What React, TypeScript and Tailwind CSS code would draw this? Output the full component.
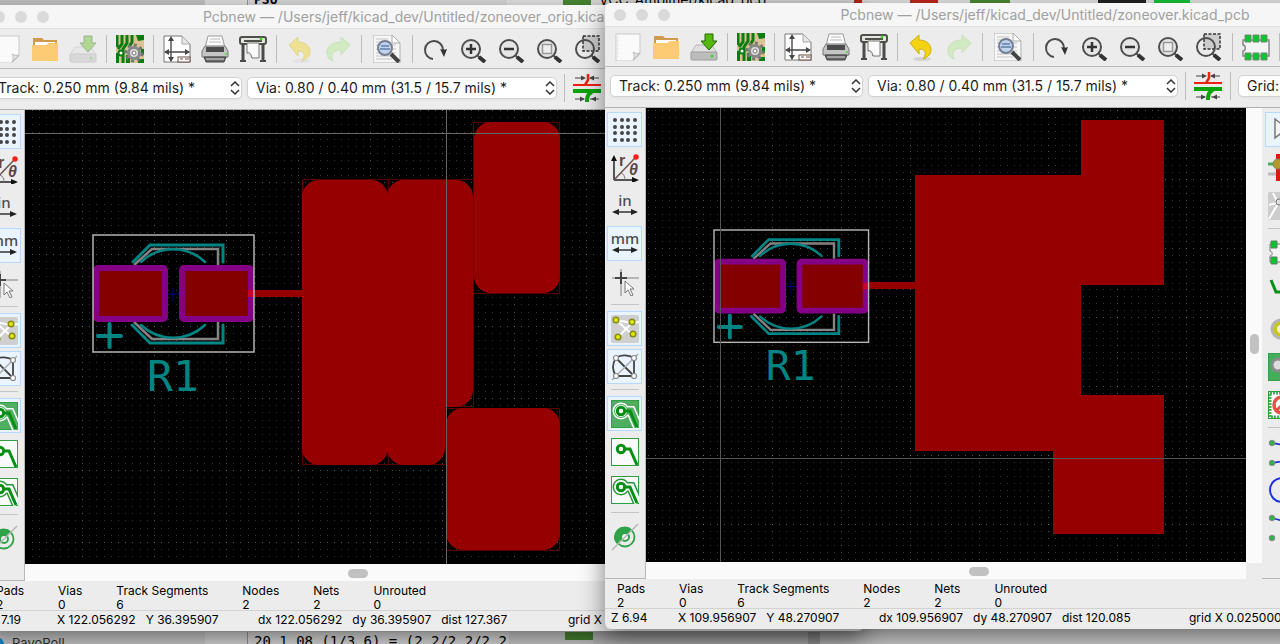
import type { ReactNode } from "react";
import clsx from "clsx";

/* ---------- toolbar glyphs, all on a 28px box ---------- */

function Icon({ children }: { children: ReactNode }) {
  return (
    <svg viewBox="0 0 28 28" className="size-7 shrink-0" fill="none" aria-hidden="true">
      {children}
    </svg>
  );
}

const NewIcon = () => (
  <Icon>
    <path d="M2 1h24v20l-7 7H2z" fill="#fafafa" stroke="#c9c9c9" />
    <path d="M26 20c-3 1-5 0-7-1 2 3 1 6 0 8z" fill="#e2e2e2" stroke="#bdbdbd" />
    <path d="M4 3v22" stroke="#d5d5d5" strokeDasharray="1 1" />
  </Icon>
);

const OpenIcon = () => (
  <Icon>
    <path d="M2 3h9l2 2h13v20H2z" fill="#cf9a4b" />
    <path d="M4 7h20v6H4z" fill="#fff" />
    <path d="M1 10h14l3-2h9v18H1z" fill="#fdcb74" />
  </Icon>
);

const SaveIcon = () => (
  <Icon>
    <path d="M6 12h16l5 8H1z" fill="#e0e0e0" stroke="#b4b4b4" />
    <rect x="1" y="19" width="26" height="8" rx="1" fill="#bcbcbc" stroke="#9c9c9c" />
    <circle cx="22" cy="23" r="1.5" fill="#39d32c" />
    <path d="M15 1h8v7h4l-8 9-8-9h4z" fill="#56b80e" stroke="#23640a" />
  </Icon>
);

const BoardIcon = () => (
  <Icon>
    <rect width="28" height="28" fill="#dcc193" />
    <path d="M1 0v12M6 0v9l-4 5M11 0v8l-4 6v14M16 0v7l-3 5" stroke="#0a7d12" strokeWidth="3" />
    <path d="M20 0h8v5l-6 1zM0 18h3v10H0zM10 20h4v8h-4zM24 8h4M22 24h6v4h-6zM25 14h3v6h-3z" fill="#0a7d12" />
    <circle cx="5" cy="18" r="2.5" fill="#fff" stroke="#0a7d12" strokeWidth="2" />
    <circle cx="18" cy="18" r="8" stroke="#777" strokeWidth="3" strokeDasharray="3 3.2" />
    <circle cx="18" cy="18" r="5.5" fill="#ddd" stroke="#888" strokeWidth="3" />
    <circle cx="18" cy="18" r="2" fill="#fff" stroke="#777" />
  </Icon>
);

const PageIcon = () => (
  <Icon>
    <path d="M1 1h18l8 8v18H1z" fill="#fff" stroke="#777" />
    <path d="M19 1v8h8z" fill="#e6e6e6" stroke="#aaa" />
    <path d="M8 3v23M2 17h24" stroke="#484848" strokeWidth="1.4" />
    <path d="m8 1-3 5h6zM8 27l-3-5h6zM1 17l5-3v6zM27 17l-5-3v6z" fill="#484848" />
    <rect x="15" y="22" width="12" height="5" fill="#fff" stroke="#6b4d40" />
    <path d="M17 24h3m2 0h4" stroke="#6b4d40" />
  </Icon>
);

const PrintIcon = () => (
  <Icon>
    <path d="M7 1h14l3 12H4z" fill="#fcfcfc" stroke="#999" />
    <path d="M9 4h10M8 7h12" stroke="#bbb" />
    <path d="M4 11h20l3 5v6H1v-6z" fill="#c5c5c5" stroke="#777" />
    <path d="M5 12h18v5H5z" fill="#4b4b4b" />
    <path d="M3 22h22l-2 5H5z" fill="#696969" stroke="#444" />
    <path d="M5 24h18" stroke="#ddd" />
    <circle cx="25" cy="19" r="1" fill="#47df31" />
  </Icon>
);

const PlotIcon = () => (
  <Icon>
    <rect x="1" y="2" width="26" height="7" rx="2" fill="#e5e5df" stroke="#50504a" strokeWidth="2" />
    <path d="M5 6h18" stroke="#50504a" strokeWidth="2" />
    <circle cx="22" cy="4" r="1.4" fill="#3ed31c" />
    <path d="M4 9v16M24 9v16" stroke="#4b4b4b" strokeWidth="3" />
    <path d="M1 26h6M21 26h6" stroke="#4b4b4b" strokeWidth="2" />
    <path d="M8 8h12v15h-7c-1-3-2-5-5-5z" fill="#fafafa" stroke="#777" />
    <path d="M8 18c3-1 4 1 5 5" fill="#ddd" stroke="#777" />
  </Icon>
);

const UndoIcon = () => (
  <Icon>
    <ellipse cx="15" cy="26" rx="9" ry="2" fill="#000" opacity=".1" />
    <path d="M3 10 12 2v5c8 0 12 5 12 10 0 4-3 7-8 9 3-4 4-10-4-10v5z" fill="#f4d313" stroke="#cdb010" />
  </Icon>
);

const RedoIcon = () => (
  <Icon>
    <path d="M26 10 17 2v5C8 7 3 12 3 17c0 5 2 8 6 9-3-6 0-11 8-11v5z" fill="#a9e886" stroke="#93d46e" />
  </Icon>
);

const FindIcon = () => (
  <Icon>
    <path d="M0 0h19l8 8v20H0z" fill="#f6f6f6" stroke="#b0b0b0" />
    <path d="M19 0v8h8z" fill="#fff" stroke="#aaa" />
    <path d="M3 4h12M3 7h14M3 10h20M3 14h20M3 18h20M3 21h20M3 24h16" stroke="#c3c3c3" />
    <circle cx="12" cy="13" r="7" fill="#b4cdf0" fillOpacity=".8" stroke="#747f90" strokeWidth="2" />
    <path d="M8 11h8M7 14h10" stroke="#6480a8" strokeWidth="1.5" />
    <path d="m18 19 8 8" stroke="#444" strokeWidth="4" />
  </Icon>
);

const RedrawIcon = () => (
  <Icon>
    <path d="M11 24A9 9 0 1 1 21 15" stroke="#4d4d4d" strokeWidth="2" />
    <path d="M18 14c2 1 5 1 7 0l-3 8z" fill="#333" />
  </Icon>
);

function ZoomIcon({ kind }: { kind: "in" | "out" | "fit" | "area" }) {
  return (
    <Icon>
      {kind === "area" && (
        <rect x="9" y="1" width="16" height="15" fill="#ccc" stroke="#333" strokeWidth="1.5" strokeDasharray="3 1.5" />
      )}
      <circle cx="11" cy="14" r="9" fill={kind === "area" ? "none" : "#e6e6e6"} stroke="#4f4f4f" strokeWidth="2" />
      <path d="m17 20 3 3" stroke="#4f4f4f" strokeWidth="2" />
      <path d="m19 22 6 5" stroke="#333" strokeWidth="4" />
      {kind === "in" && <path d="M11 9v10M6 14h10" stroke="#333" strokeWidth="2.5" />}
      {kind === "out" && <path d="M6 14h10" stroke="#333" strokeWidth="2.5" />}
      {kind === "fit" && <rect x="6.5" y="9.5" width="9" height="9" fill="#eee" stroke="#999" strokeWidth="1.5" />}
    </Icon>
  );
}

const FootprintIcon = () => (
  <Icon>
    <path d="M1 7h26v16H1v-5c3 0 3-6 0-6z" fill="#f4f4f4" stroke="#888" strokeWidth="1.5" />
    {[4, 12, 20].map((x) => (
      <path key={x} d={`M${x - 1} 2h6v7h-6zM${x - 1} 20h6v7h-6z`} fill="#0bc52f" stroke="#6d8b70" />
    ))}
  </Icon>
);

const TrackWidthIcon = () => (
  <Icon>
    <path d="M2 4h9M17 4h9M2 25h9M17 25h9" stroke="#444" />
    <path d="m13 4-5-2.5v5zM16 4l5-2.5v5zM12 25l-5-2.5v5zM18 25l5-2.5v5z" fill="#444" />
    <path d="M15 0v6l-3 5" stroke="#ee2211" strokeWidth="2.5" />
    <path d="M0 11h28" stroke="#ee2211" strokeWidth="2" />
    <path d="M0 17h28" stroke="#0aa30a" strokeWidth="4" />
    <path d="M19 18c-4 2-5 4-5 10" stroke="#0aa30a" strokeWidth="4" />
  </Icon>
);

/* ---------- options (left side) ---------- */

const GridIcon = () => (
  <Icon>
    {[4, 11, 17, 24].map((y) =>
      [4, 11, 17, 24].map((x) => <circle key={`${x}-${y}`} cx={x} cy={y} r="2" fill="#464646" />)
    )}
  </Icon>
);

const PolarIcon = () => (
  <Icon>
    <path d="M3 26V4M3 26h20" stroke="#222" strokeWidth="1.5" />
    <path d="m3 1-3 6h6zM28 26l-7-3v6z" fill="#111" />
    <path d="M3 26 24 4" stroke="#6b5656" strokeWidth="1.5" />
    <path d="M10 19c3 1 4 4 4 7" stroke="#777" />
    <circle cx="25" cy="3" r="2.7" fill="#fb1d12" />
    <text x="8" y="12" className="font-['Liberation_Sans'] text-[16px] font-bold" fill="#5e4545">r</text>
    <text x="18" y="21" className="font-['Liberation_Sans'] text-[16px] font-bold italic" fill="#5e4545">θ</text>
  </Icon>
);

function UnitIcon({ unit }: { unit: string }) {
  return (
    <Icon>
      <text x="14" y="14" textAnchor="middle" className="font-['Noto_Sans'] text-[15px] font-medium" fill="#4c4c4c">
        {unit}
      </text>
      <path d="M5 20h18" stroke="#333" strokeWidth="1.5" />
      <path d="m1 20 7-3v6zM27 20l-7-3v6z" fill="#222" />
    </Icon>
  );
}

const CursorIcon = () => (
  <Icon>
    <path d="M10 1v27M1 10h27" stroke="#b5b5b5" strokeWidth="2" />
    <path d="M10 4v12M4 10h12" stroke="#444" strokeWidth="2" />
    <path d="m14 13 9 8h-4l3 6-2 1-3-6-3 3z" fill="#fff" stroke="#777" />
  </Icon>
);

const RatsnestIcon = () => (
  <Icon>
    <rect width="28" height="28" rx="2" fill="#cfcfcf" />
    <path d="M5 5 22 20M21 8 7 22M5 5l16 3 7-1" stroke="#fff" strokeWidth="2" />
    {[[5, 5], [21, 7], [7, 22], [22, 19]].map(([x, y]) => (
      <circle key={`${x}-${y}`} cx={x} cy={y} r="2.8" fill="#e1e80c" stroke="#858b1c" strokeWidth="1.5" />
    ))}
  </Icon>
);

const ModuleRatsnestIcon = () => (
  <Icon>
    <path d="M5 5C10 1 18 2 23 5v18H5C1 17 1 11 5 5l18 18" stroke="#444" strokeWidth="1.8" />
    <path d="M1 27 27 1" stroke="#aaa" strokeWidth="1.5" />
    {[[5, 5], [23, 5], [5, 23], [23, 23]].map(([x, y]) => (
      <circle key={`${x}-${y}`} cx={x} cy={y} r="2.5" fill="#fff" stroke="#888" strokeWidth="1.2" />
    ))}
  </Icon>
);

function ZoneIcon({ mode }: { mode: "fill" | "none" | "outline" }) {
  return (
    <Icon>
      <rect x=".5" y=".5" width="27" height="27" fill={mode === "fill" ? "#4fae60" : "#fafafa"} stroke="#2fa042" />
      {mode !== "none" && (
        <>
          <path d="M10 11h10l7 16" stroke={mode === "fill" ? "#fff" : "#23993a"} strokeWidth="10" />
          <circle cx="10" cy="11" r="8.5" fill={mode === "fill" ? "#fff" : "#23993a"} />
          <path d="M10 11h10l7 16" stroke={mode === "fill" ? "#4fae60" : "#fafafa"} strokeWidth="7" />
          <circle cx="10" cy="11" r="7" fill={mode === "fill" ? "#4fae60" : "#fafafa"} />
          <circle cx="10" cy="11" r="6" fill="#fff" />
        </>
      )}
      <path d="M12 11h7l7 16" stroke="#078f13" strokeWidth="3" />
      <circle cx="10" cy="11" r="3.7" fill="#fff" stroke="#078f13" strokeWidth="3" />
    </Icon>
  );
}

const ViaSketchIcon = () => (
  <Icon>
    <path d="M14 4a10 10 0 0 0-8 17L21 7a10 10 0 0 0-7-3z" fill="#2fa348" />
    <circle cx="14" cy="14" r="9.5" stroke="#2fa348" strokeWidth="1.8" />
    <circle cx="14" cy="14" r="4" fill="#eee" stroke="#2fa348" strokeWidth="2" />
    <path d="M1 27 27 1" stroke="#b5b5b5" strokeWidth="1.5" />
  </Icon>
);

/* ---------- drawing tools (right side) ---------- */

const ArrowIcon = () => (
  <Icon>
    <path d="m7 3 17 13h-8l4 9-4 2-4-9-5 4z" fill="#f4f4f4" stroke="#777" strokeWidth="1.5" />
  </Icon>
);

const HighlightNetIcon = () => (
  <Icon>
    <path d="M0 10h9" stroke="#43b05a" strokeWidth="3" />
    <path d="M0 20h9" stroke="#bcbcbc" strokeWidth="3" />
    <rect x="8" width="12" height="27" fill="#d91c10" />
    <circle cx="10" cy="10" r="5" fill="#b49a2c" stroke="#8a8a5c" />
  </Icon>
);

const LocalRatsnestIcon = () => (
  <Icon>
    <rect width="28" height="28" rx="2" fill="#cdcdcd" />
    <path d="m1 27 10-17M5 1l4 8M1 13l7-2" stroke="#fff" strokeWidth="2" />
    <circle cx="11" cy="10" r="3" fill="#ddd" stroke="#777" />
  </Icon>
);

const ModuleIcon = () => (
  <Icon>
    <path d="M8 5H2v7c3 1 3 4 0 5v6h24V5z" fill="#f4f4f4" stroke="#777" />
    <path d="M3 2h6v7H3zM3 18h6v7H3z" fill="#0bc52f" stroke="#5f7f62" />
  </Icon>
);

const RouteIcon = () => (
  <Icon>
    <path d="m3 3 5 12h8l8-12" stroke="#079015" strokeWidth="3" />
  </Icon>
);

const ViaIcon = () => (
  <Icon>
    <circle cx="13" cy="14" r="9" fill="#c9c51b" stroke="#b5b5b5" strokeWidth="3" />
    <circle cx="13" cy="14" r="4" fill="#eee" />
  </Icon>
);

const FillZoneIcon = () => (
  <Icon>
    <rect width="28" height="28" fill="#43ad59" stroke="#2b9340" />
    <circle cx="10" cy="12" r="6" fill="#ddd" stroke="#8b8b8b" strokeWidth="3" />
  </Icon>
);

const KeepoutIcon = () => (
  <Icon>
    <rect x="2" y="2" width="24" height="24" fill="#fff" stroke="#43ad59" strokeWidth="3" strokeDasharray="2 1" />
    <rect x=".5" y=".5" width="27" height="27" stroke="#2fa042" />
    <circle cx="14" cy="14" r="8" fill="#fff" stroke="#ea5146" strokeWidth="3.5" />
    <path d="m9 19 10-10" stroke="#ea5146" strokeWidth="3" />
  </Icon>
);

const LineIcon = () => (
  <Icon>
    <path d="m4 5 22 4M4 25l22-4" stroke="#2433d4" strokeWidth="1.8" />
    <circle cx="4" cy="5" r="2.8" fill="#2db34a" stroke="#8c8c8c" />
    <circle cx="4" cy="25" r="2.8" fill="#2db34a" stroke="#8c8c8c" />
  </Icon>
);

const CircleIcon = () => (
  <Icon>
    <circle cx="14" cy="14" r="12" stroke="#1b2fe0" strokeWidth="2" />
  </Icon>
);

const ArcIcon = () => (
  <Icon>
    <path d="m4 4 22 6" stroke="#2433d4" strokeWidth="1.8" />
    <circle cx="4" cy="4" r="2.8" fill="#2db34a" stroke="#8c8c8c" />
    <circle cx="4" cy="24" r="2.8" fill="#2db34a" stroke="#8c8c8c" />
  </Icon>
);

/* ---------- board drawing ---------- */

// Tile of ten by ten grid points, the first row and column a little brighter.
function GridPattern({ id, step, x, y }: { id: string; step: number; x: number; y: number }) {
  const cells = Array.from({ length: 100 }, (_, i) => [i % 10, Math.floor(i / 10)]);
  return (
    <pattern id={id} x={x} y={y} width={step * 10} height={step * 10} patternUnits="userSpaceOnUse">
      {cells.map(([c, r]) => (
        <rect
          key={`${c}-${r}`}
          x={Math.round(c * step) + 2}
          y={Math.round(r * step) + 2}
          width="1"
          height="1"
          fill={c === 0 && r === 0 ? "#7a7a7a" : c === 0 || r === 0 ? "#545454" : "#353535"}
        />
      ))}
    </pattern>
  );
}

function Footprint() {
  return (
    <>
      <g stroke="#848484" strokeWidth="2.5" fill="none">
        <path d="m41 30 18-16h66v16M41 87l18 17h66V87" />
      </g>
      <g stroke="#008484" strokeWidth="3" fill="none" strokeLinecap="round">
        <path d="m40 27 17-17h73v17M39 90l18 18h73V90" />
        <path d="M48 27c18-17 46-17 64 0M48 90c18 17 46 17 64 0" strokeWidth="2.5" />
        <path d="M5 101h23M16.5 89v23" strokeWidth="4" />
      </g>
      <path d="M74 59h13M80 53v13" stroke="#000084" strokeWidth="1" />
      <g fill="#840000" stroke="#840084" strokeWidth="6">
        <rect x="3" y="33" width="69" height="51" rx="2" />
        <rect x="89" y="33" width="69" height="51" rx="2" />
      </g>
      <path d="M155 55h6v7h-6z" fill="#c8002e" />
      <rect x="0" y="0" width="161" height="117" fill="none" stroke="#b4b4b4" strokeWidth="1.5" />
      <text
        x="54"
        y="156"
        className="font-['DejaVu_Sans_Mono',monospace] text-[43px]"
        fill="#008484"
      >
        R1
      </text>
    </>
  );
}

function OriginalBoard() {
  return (
    <svg className="block h-[454px] w-full bg-black" role="img" aria-label="Board with rounded zones">
      <defs>
        <GridPattern id="grid-a" step={7.2} x={55} y={70} />
      </defs>
      <rect width="100%" height="100%" fill="url(#grid-a)" />
      <g fill="none" stroke="#5a0000">
        <path d="M277.5 69.5h171v227h-28v58h-143zM448.5 12.5h86v171h-86zM421.5 298.5h113v142h-113zM363.5 70v285" />
      </g>
      <g fill="#960000">
        <rect x="277" y="70" width="86" height="285" rx="17" />
        <rect x="362" y="70" width="86" height="227" rx="17" />
        <rect x="362" y="70" width="58" height="285" rx="17" />
        <rect x="345" y="88" width="36" height="249" />
        <rect x="449" y="12" width="86" height="171" rx="17" />
        <rect x="421" y="298" width="114" height="142" rx="17" />
        <path d="M224 180h54v7h-54z" />
      </g>
      <g transform="translate(68 125)">
        <Footprint />
      </g>
      <path d="M421.5 0v454M0 23.5h1400" stroke="#666" />
    </svg>
  );
}

function FixedBoard() {
  return (
    <svg className="block h-[454px] w-full bg-black" role="img" aria-label="Board with merged zone">
      <defs>
        <GridPattern id="grid-b" step={6.9} x={55} y={69} />
      </defs>
      <rect width="100%" height="100%" fill="url(#grid-b)" />
      <path d="M269 67h166V12h83v165h-83v110h83v139H407v-83H269z" fill="#960000" />
      <path d="M217 174h53v7h-53z" fill="#960000" />
      <g transform="translate(68 122) scale(.96)">
        <Footprint />
      </g>
      <path d="M74.5 0v454M0 350.5h1400" stroke="#555" />
    </svg>
  );
}

/* ---------- window chrome ---------- */

function ToolButton({ label, disabled, wide, children }: { label: string; disabled?: boolean; wide?: boolean; children: ReactNode }) {
  return (
    <button
      type="button"
      aria-label={label}
      disabled={disabled}
      className={clsx("mx-[5px] flex h-7 shrink-0 items-center justify-center disabled:opacity-40", wide ? "w-8" : "w-7")}
    >
      {children}
    </button>
  );
}

const Sep = ({ className = "mx-1" }: { className?: string }) => (
  <span className={clsx("h-7 w-px shrink-0 bg-[#bdbdbd]", className)} />
);

function Picker({ label, value, className }: { label: string; value: string; className: string }) {
  return (
    <div className={clsx("relative shrink-0", className)}>
      <select
        aria-label={label}
        className="block h-[22px] w-full appearance-none rounded-[5px] border border-[#d2d2d2] bg-white pl-2 text-[14px] leading-5 text-[#1c1c1c] shadow-xs"
      >
        <option>{value}</option>
      </select>
      <svg viewBox="0 0 10 14" className="pointer-events-none absolute top-1 right-0.5 h-3.5 w-2.5" fill="none" stroke="#333" strokeWidth="1.5">
        <path d="m1 5 4-4 4 4M1 9l4 4 4-4" />
      </svg>
    </div>
  );
}

function SideButton({ label, active, children }: { label: string; active?: boolean; children: ReactNode }) {
  return (
    <button
      type="button"
      aria-label={label}
      aria-pressed={active}
      className={clsx(
        "flex size-[35px] shrink-0 items-center justify-center border",
        active ? "border-[#b7d9fb] bg-[#e9f4fe]" : "border-transparent"
      )}
    >
      {children}
    </button>
  );
}

const SideSep = () => <span className="mt-0.5 mb-[3px] h-px w-7 shrink-0 bg-[#c4c4c4]" />;

interface PcbWindowProps {
  title: string;
  modified?: boolean;
  zoom: string;
  cursor: [string, string];
  dist: string;
  grid: string;
  className: string;
  children: ReactNode;
}

const counts = [
  ["Pads", "2"],
  ["Vias", "0"],
  ["Track Segments", "6"],
  ["Nodes", "2"],
  ["Nets", "2"],
  ["Unrouted", "0"],
];

function PcbWindow({ title, modified, zoom, cursor, dist, grid, className, children }: PcbWindowProps) {
  const [x, y] = cursor;
  return (
    <section
      className={clsx(
        "absolute flex w-[880px] flex-col overflow-hidden rounded-md bg-[#ececec] shadow-[0_8px_24px_rgba(0,0,0,0.5)]",
        className
      )}
    >
      <header className="flex h-6 items-center border-b border-[#e0e0e0] bg-[#f6f6f6] px-[9px]">
        <div className="flex gap-2.5">
          <span className="size-3 rounded-full bg-[#dadada]" />
          <span className="size-3 rounded-full bg-[#dadada]" />
          <span className="size-3 rounded-full bg-[#dadada]" />
        </div>
        <h1 className="mr-14 flex-1 text-center text-[14px] leading-5 whitespace-nowrap text-[#a0a0a0]">{title}</h1>
      </header>

      <div className="flex h-10 items-center border-b border-[#bcbcbc] px-1">
        <ToolButton label="New board"><NewIcon /></ToolButton>
        <ToolButton label="Open board"><OpenIcon /></ToolButton>
        <ToolButton label="Save board" disabled={!modified}><SaveIcon /></ToolButton>
        <Sep />
        <ToolButton label="Board setup"><BoardIcon /></ToolButton>
        <Sep />
        <ToolButton label="Page settings"><PageIcon /></ToolButton>
        <ToolButton label="Print"><PrintIcon /></ToolButton>
        <ToolButton label="Plot"><PlotIcon /></ToolButton>
        <Sep />
        <ToolButton label="Undo" disabled={!modified}><UndoIcon /></ToolButton>
        <ToolButton label="Redo" disabled><RedoIcon /></ToolButton>
        <Sep />
        <ToolButton label="Find" wide><FindIcon /></ToolButton>
        <Sep />
        <ToolButton label="Redraw"><RedrawIcon /></ToolButton>
        <ToolButton label="Zoom in"><ZoomIcon kind="in" /></ToolButton>
        <ToolButton label="Zoom out"><ZoomIcon kind="out" /></ToolButton>
        <ToolButton label="Zoom to fit"><ZoomIcon kind="fit" /></ToolButton>
        <ToolButton label="Zoom to selection"><ZoomIcon kind="area" /></ToolButton>
        <Sep />
        <ToolButton label="Footprint editor"><FootprintIcon /></ToolButton>
        <Sep />
      </div>

      <div className="flex h-10 items-center gap-[5px] px-[5px] pb-[3px]">
        <Picker label="Track width" value="Track: 0.250 mm (9.84 mils) *" className="w-[253px]" />
        <Picker label="Via size" value="Via: 0.80 / 0.40 mm (31.5 / 15.7 mils) *" className="w-[310px]" />
        <Sep className="mx-0.5" />
        <button type="button" aria-label="Use existing track width" className="mx-px"><TrackWidthIcon /></button>
        <Sep className="mx-0.5" />
        <Picker label="Grid" value="Grid: 0.6350 mm (25.0 mils)" className="w-[220px]" />
      </div>

      <div className="flex border-t border-[#b0b0b0]">
        <nav className="flex w-[41px] shrink-0 flex-col items-center gap-[3px] border-r border-b border-[#b8b8b8] pt-1 pr-px">
          <SideButton label="Show grid" active><GridIcon /></SideButton>
          <SideButton label="Polar coordinates"><PolarIcon /></SideButton>
          <SideButton label="Units in inches"><UnitIcon unit="in" /></SideButton>
          <SideButton label="Units in millimetres" active><UnitIcon unit="mm" /></SideButton>
          <SideButton label="Cursor shape"><CursorIcon /></SideButton>
          <SideSep />
          <SideButton label="Show ratsnest" active><RatsnestIcon /></SideButton>
          <SideButton label="Show module ratsnest" active><ModuleRatsnestIcon /></SideButton>
          <SideSep />
          <SideButton label="Show filled zones" active><ZoneIcon mode="fill" /></SideButton>
          <SideButton label="Hide filled zones"><ZoneIcon mode="none" /></SideButton>
          <SideButton label="Show zone outlines"><ZoneIcon mode="outline" /></SideButton>
          <SideSep />
          <SideButton label="Sketch vias"><ViaSketchIcon /></SideButton>
        </nav>

        <main className="min-w-0 flex-1">
          {children}
          <div className="flex h-[17px] items-center bg-[#fafafa] pt-px pl-[323px]">
            <span className="h-[9px] w-5 rounded-full bg-[#c1c1c1]" />
          </div>
        </main>

        <div className="mb-4 flex w-4 shrink-0 flex-col items-center bg-[#fafafa] pt-[226px]">
          <span className="h-5 w-[9px] rounded-full bg-[#c1c1c1]" />
        </div>

        <nav className="flex w-10 shrink-0 flex-col items-center gap-[3px] border-b border-[#b8b8b8] pt-1">
          <SideButton label="Select" active><ArrowIcon /></SideButton>
          <SideButton label="Highlight net"><HighlightNetIcon /></SideButton>
          <SideButton label="Local ratsnest"><LocalRatsnestIcon /></SideButton>
          <SideSep />
          <SideButton label="Add footprint"><ModuleIcon /></SideButton>
          <SideButton label="Route tracks"><RouteIcon /></SideButton>
          <SideButton label="Add via"><ViaIcon /></SideButton>
          <SideButton label="Add filled zone"><FillZoneIcon /></SideButton>
          <SideButton label="Add keepout"><KeepoutIcon /></SideButton>
          <SideSep />
          <SideButton label="Add line"><LineIcon /></SideButton>
          <SideButton label="Add circle"><CircleIcon /></SideButton>
          <SideButton label="Add arc"><ArcIcon /></SideButton>
        </nav>
        <aside className="w-[183px] shrink-0" />
      </div>

      <dl className="flex h-[30px] gap-[34px] border-b border-[#d2d2d2] px-3 pt-[3px] text-[12px] leading-[14px] whitespace-nowrap text-black">
        {counts.map(([name, value]) => (
          <div key={name}>
            <dt>{name}</dt>
            <dd>{value}</dd>
          </div>
        ))}
      </dl>
      <footer className="grid h-5 grid-cols-[67px_201px_310px_1fr] pt-px pl-1.5 text-[12px] leading-4 whitespace-nowrap text-black">
        <span>Z {zoom}</span>
        <span className="flex gap-2.5">
          <span>X {x}</span>
          <span>Y {y}</span>
        </span>
        <span className="flex gap-2.5">
          <span>dx {x}</span>
          <span>dy {y}</span>
          <span>dist {dist}</span>
        </span>
        <span>{grid}</span>
      </footer>
    </section>
  );
}

/* Slivers of whatever else is open behind the two editors. */
function Backdrop() {
  return (
    <div className="flex h-full flex-col justify-between text-[13px] leading-[10px] whitespace-nowrap text-black">
      <div className="flex h-[5px] items-end overflow-hidden">
        <div className="h-full w-[205px] bg-[#c4c4c4]" />
        <div className="h-full w-[42px] bg-[#e0e0e0]" />
        <div className="flex h-full w-[260px] items-end border-l border-[#999] bg-[#d9d9d9] pl-1.5 font-['DejaVu_Sans_Mono',monospace] font-bold">
          PSU
        </div>
        <div className="flex h-full flex-1 items-end gap-2 bg-[#e4e4e4] pl-14">
          <span className="h-full w-7 bg-[#4b8a34]" />
          <span className="text-[14px]">VCC_Amplifier/kicad_pcb</span>
          <span className="ml-20 h-full w-2 bg-[#c0281c]" />
          <span className="ml-10 h-full w-7 bg-[#c0281c]" />
          <span className="ml-6 h-full w-10 bg-[#4b8a34]" />
          <span className="ml-20 h-full w-12 bg-[#222]" />
          <span className="h-full w-9 bg-[#15c437]" />
        </div>
      </div>
      <div className="flex h-3 items-start overflow-hidden">
        <div className="flex h-full w-[205px] items-start gap-2 bg-[#cfcfcf] pt-1.5 text-[#333]">
          <span className="-ml-2 size-3 shrink-0 rounded-full bg-[#1c8fe0]" />
          <span>PavoRoll</span>
        </div>
        <div className="h-full w-[42px] bg-[#dcdcdc]" />
        <div className="h-full w-[262px] overflow-hidden border-l border-[#999] bg-[#dedede] pt-1 pl-1.5 font-['DejaVu_Sans_Mono',monospace] text-[14px]">
          20 1 08 (1/3 6) = (2 2/2 2/2 2
        </div>
        <div className="h-full w-14 bg-[#cfcfcf]" />
        <div className="h-2 w-7 bg-[#4b8a34]" />
        <div className="h-full w-[215px] bg-[#c6c6c6]" />
        <div className="h-full w-3 bg-[#a9a9a9]" />
        <div className="h-full flex-1 bg-[#d0d0d0]" />
      </div>
    </div>
  );
}

export default function App() {
  return (
    <div className="relative h-screen w-full overflow-hidden bg-[#cfcfcf] font-['Inter','Liberation_Sans',sans-serif]">
      <Backdrop />
      <PcbWindow
        title="Pcbnew — /Users/jeff/kicad_dev/Untitled/zoneover_orig.kicad_pcb"
        zoom="7.19"
        cursor={["122.056292", "36.395907"]}
        dist="127.367"
        grid="grid X"
        className="top-[5px] -left-4"
      >
        <OriginalBoard />
      </PcbWindow>
      <PcbWindow
        title="Pcbnew — /Users/jeff/kicad_dev/Untitled/zoneover.kicad_pcb"
        modified
        zoom="6.94"
        cursor={["109.956907", "48.270907"]}
        dist="120.085"
        grid="grid X 0.025000 Y 0.025000"
        className="top-[3px] left-[605px]"
      >
        <FixedBoard />
      </PcbWindow>
    </div>
  );
}
